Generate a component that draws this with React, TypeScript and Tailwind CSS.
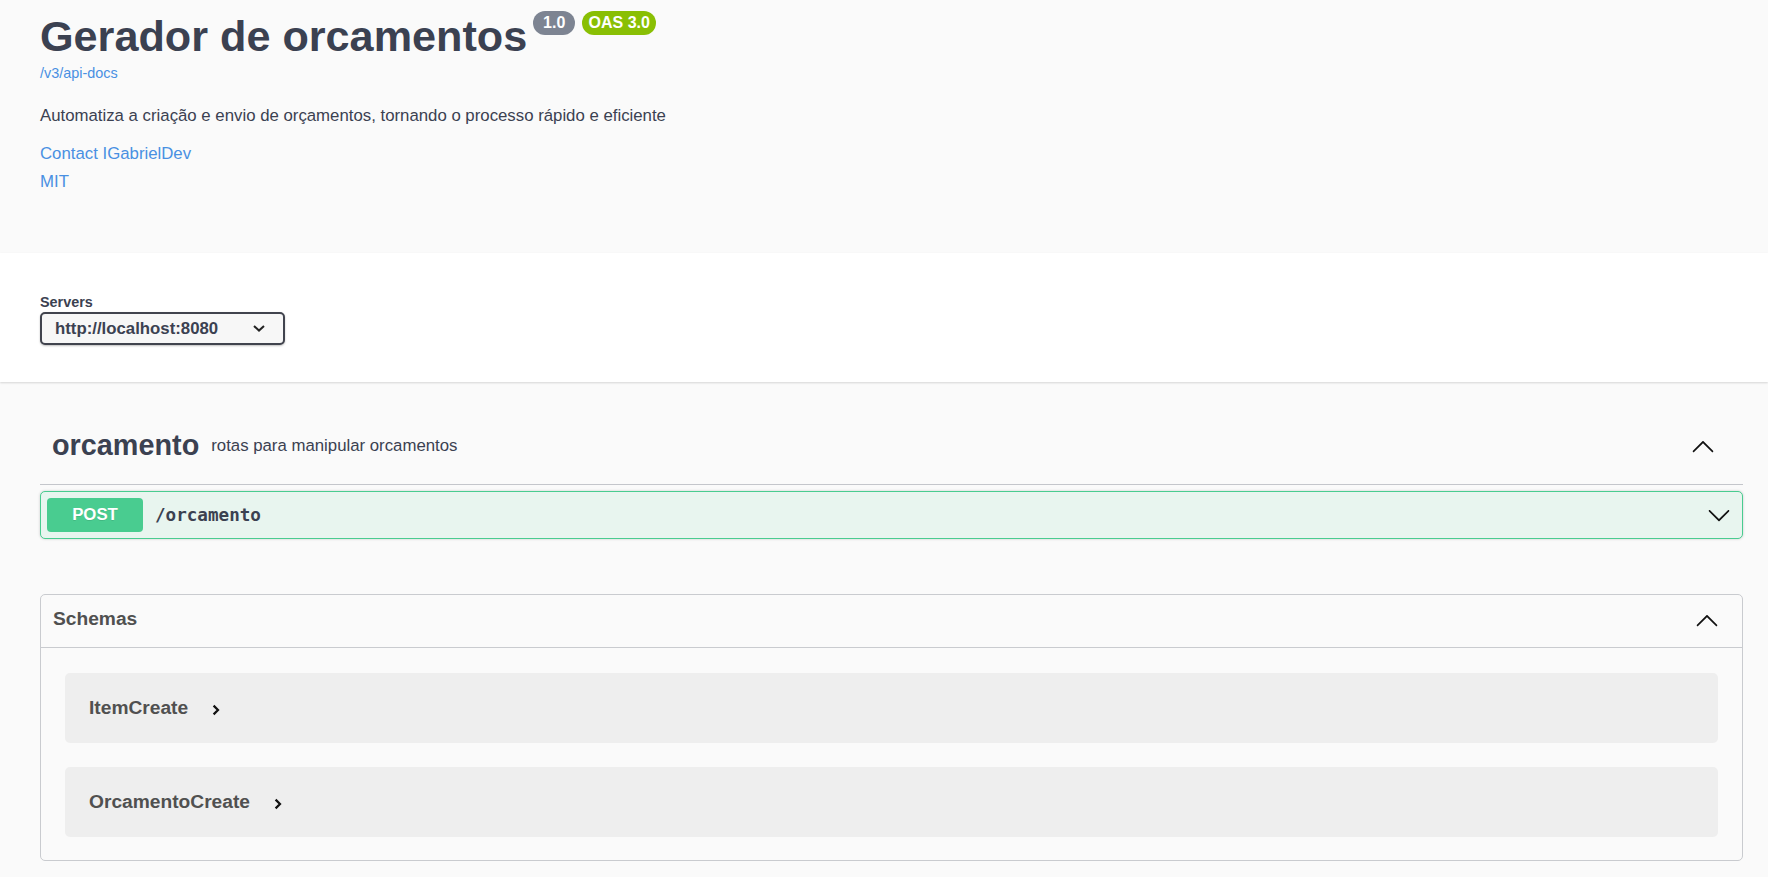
import React from 'react'

const ArrowUp = ({ className = '' }: { className?: string }) => (
  <svg viewBox="0 0 20 20" width="24" height="24" className={className} fill="#111">
    <path d="M17.418 14.908c.272.268.709.268.979 0s.271-.701 0-.969l-7.908-7.83c-.27-.268-.707-.268-.979 0l-7.908 7.83c-.27.268-.27.701 0 .969.271.268.709.268.979 0L10 7.767l7.418 7.141z" />
  </svg>
)

const ArrowDown = ({ className = '' }: { className?: string }) => (
  <svg viewBox="0 0 20 20" width="24" height="24" className={className} fill="#111">
    <path d="M17.418 6.109c.272-.268.709-.268.979 0s.271.701 0 .969l-7.908 7.83c-.27.268-.707.268-.979 0l-7.908-7.83c-.27-.268-.27-.701 0-.969.271-.268.709-.268.979 0L10 13.25l7.418-7.141z" />
  </svg>
)

const ModelToggle = () => (
  <svg viewBox="0 0 8 12" width="8" height="12" className="ml-[24px] mt-[3px]" fill="none" stroke="#111" strokeWidth="2.2">
    <path d="M1.6 1.6L6 6l-4.4 4.4" />
  </svg>
)

function Model({ name }: { name: string }) {
  return (
    <div className="mx-[24px] flex h-[70px] items-center rounded-[5px] bg-[#eeeeee] pl-[24px]">
      <span className="text-[19.2px] font-bold text-[#505050]">{name}</span>
      <ModelToggle />
    </div>
  )
}

export default function App() {
  return (
    <div className="min-h-screen bg-[#fafafa] font-['Liberation_Sans',Arial,sans-serif] text-[#3b4151]">
      {/* info */}
      <div className="pl-[40px] pr-[25px] pt-[11px] pb-[61px]">
        <div className="flex items-start">
          <h2 className="text-[43.2px] font-bold leading-[50px]">Gerador de orcamentos</h2>
          <span className="ml-[6px] flex h-[24px] w-[42px] items-center justify-center rounded-full bg-[#7d8492] text-[16px] font-bold leading-[24px] text-white">
            1.0
          </span>
          <span className="ml-[7px] flex h-[24px] w-[74px] items-center justify-center rounded-full bg-[#89bf04] text-[16px] font-bold leading-[24px] text-white">
            OAS 3.0
          </span>
        </div>
        <a className="mt-[4px] block text-[14.4px] leading-[17px] text-[#4990e2]">/v3/api-docs</a>
        <p className="mt-[24px] text-[16.8px] leading-[20px]">
          Automatiza a criação e envio de orçamentos, tornando o processo rápido e eficiente
        </p>
        <a className="mt-[18px] block text-[16.8px] leading-[20px] text-[#4990e2]">Contact IGabrielDev</a>
        <a className="mt-[8px] block text-[16.8px] leading-[20px] text-[#4990e2]">MIT</a>
      </div>

      {/* servers */}
      <div className="h-[129px] bg-white pl-[40px] pt-[41px] shadow-[0_1px_2px_0_rgba(0,0,0,0.15)]">
        <div className="text-[14.4px] font-bold leading-[17px]">Servers</div>
        <div className="mt-[1px] flex h-[33px] w-[245px] items-center rounded-[5px] border-2 border-[#41444e] bg-[#f7f7f7] pl-[13px] pr-[18px] shadow-[0_1px_2px_0_rgba(0,0,0,0.25)]">
          <span className="text-[16.8px] font-bold">http://localhost:8080</span>
          <svg viewBox="0 0 12 7" width="12" height="7" className="ml-auto" fill="none" stroke="#222" strokeWidth="2">
            <path d="M1 1l5 4.6L11 1" />
          </svg>
        </div>
      </div>

      <div className="pl-[40px] pr-[25px]">
        {/* tag */}
        <h3 className="mt-[24px] flex h-[79px] items-center border-b border-[#c4c6cb] pl-[12px] pr-[28px] pt-[2px]">
          <span className="text-[28.8px] font-bold">orcamento</span>
          <small className="pl-[12px] text-[16.8px]">rotas para manipular orcamentos</small>
          <ArrowUp className="ml-auto" />
        </h3>

        {/* operation */}
        <div className="mt-[6px] flex h-[48px] items-center rounded-[5px] border border-[#49cc90] bg-[#e8f5ef] pl-[6px] pr-[11px] shadow-[0_0_3px_rgba(0,0,0,0.19)]">
          <span className="flex h-[34px] w-[96px] items-center justify-center rounded-[4px] bg-[#49cc90] text-[16.8px] font-bold text-white [text-shadow:0_1px_0_rgba(0,0,0,0.1)]">
            POST
          </span>
          <span className="ml-[12px] font-['DejaVu_Sans_Mono',monospace] text-[17.6px] font-bold">/orcamento</span>
          <ArrowDown className="ml-auto" />
        </div>

        {/* schemas */}
        <section className="mt-[55px] rounded-[5px] border border-[#c9cbcf] pb-[23px]">
          <div className="flex h-[53px] items-center border-b border-[#c9cbcf] pb-[3px] pl-[12px] pr-[23px]">
            <span className="text-[19.2px] font-bold text-[#505050]">Schemas</span>
            <ArrowUp className="ml-auto" />
          </div>
          <div className="mt-[25px] flex flex-col gap-[24px]">
            <Model name="ItemCreate" />
            <Model name="OrcamentoCreate" />
          </div>
        </section>
      </div>
    </div>
  )
}
